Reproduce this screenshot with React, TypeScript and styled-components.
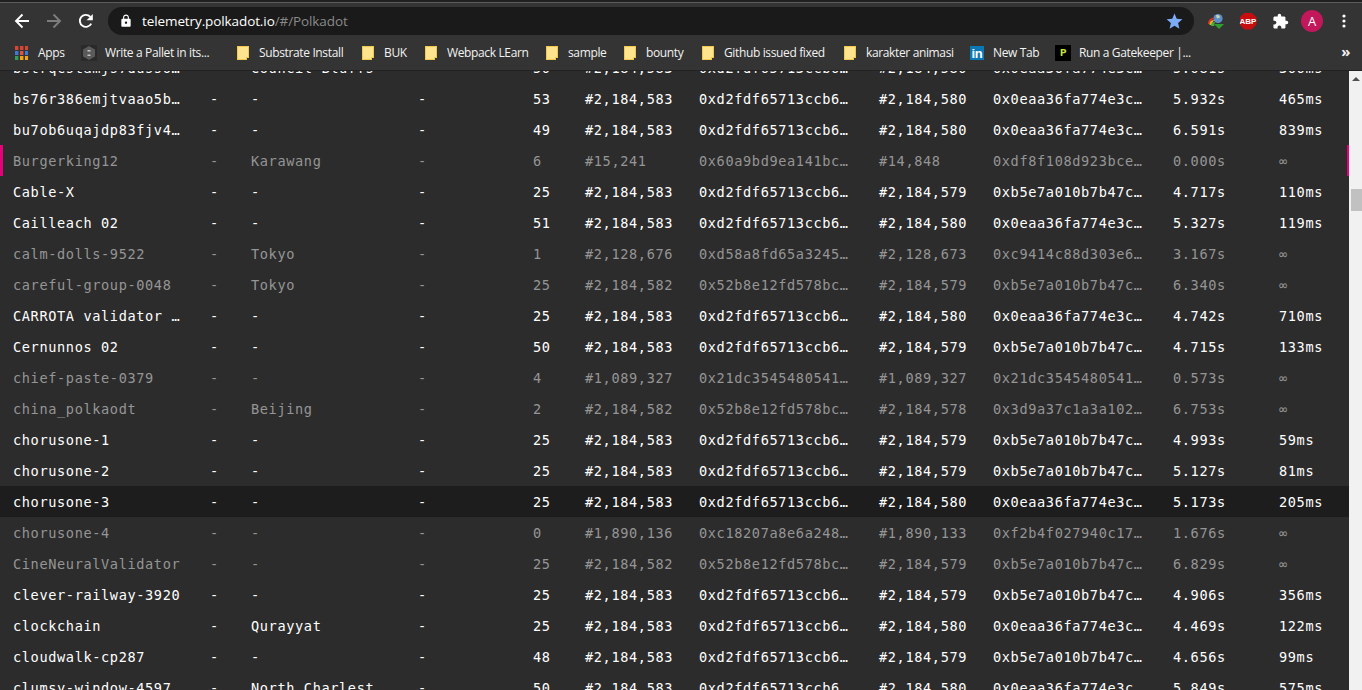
import React from "react"
import styled, { createGlobalStyle } from "styled-components"
import { MdExtension as ExtensionIcon, MdLock as LockIcon, MdStar as StarIcon } from "react-icons/md"

const GlobalStyle = createGlobalStyle`
  html, body {
    margin: 0;
    height: 100%;
    overflow: hidden;
    background: #2c2c2c;
  }
`

const Page = styled.div`
  display: flex;
  flex-direction: column;
  width: 1362px;
  height: 690px;
  overflow: hidden;
`

const TopStrip = styled.div`
  height: 2px;
  background: #202020;
  border-bottom: 1px solid #5c5c5c;
`

const Toolbar = styled.div`
  display: flex;
  align-items: center;
  height: 28px;
  padding: 4px 2px 0 6px;
  background: #343434;
`

const ToolButton = styled.div<{ $dim?: boolean }>`
  display: flex;
  align-items: center;
  justify-content: center;
  flex: none;
  width: 32px;
  height: 28px;
  color: ${(props) => (props.$dim ? "#7d7d7d" : "#ffffff")};
`

const Omnibox = styled.div`
  display: flex;
  align-items: center;
  flex: 1;
  height: 28px;
  margin: 0 6px;
  padding: 0 10px 0 11px;
  border-radius: 14px;
  background: #1a1a1a;
  color: #ffffff;
  font-family: "Open Sans", sans-serif;
  font-size: 13.5px;
  letter-spacing: -0.1px;
`

const UrlHost = styled.span`
  margin-left: 9px;
`

const UrlPath = styled.span`
  flex: 1;
  color: #8a8a8a;
`

const AbpBadge = styled.div`
  display: flex;
  align-items: center;
  justify-content: center;
  width: 17px;
  height: 17px;
  background: #c70d0d;
  clip-path: polygon(30% 0, 70% 0, 100% 30%, 100% 70%, 70% 100%, 30% 100%, 0 70%, 0 30%);
  color: #ffffff;
  font-family: "Liberation Sans", sans-serif;
  font-size: 8px;
  font-weight: 700;
`

const Avatar = styled.div`
  display: flex;
  align-items: center;
  justify-content: center;
  width: 22px;
  height: 22px;
  border-radius: 50%;
  background: #c2185b;
  color: #ffffff;
  font-family: "Open Sans", sans-serif;
  font-size: 13px;
`

const BookmarkBar = styled.div`
  position: relative;
  display: flex;
  align-items: center;
  height: 35px;
  padding-left: 15px;
  background: #343434;
  border-bottom: 1px solid #222222;
  color: #f2f2f2;
  font-family: "Open Sans", sans-serif;
  font-size: 12px;
  letter-spacing: -0.36px;
`

const Bookmark = styled.div<{ $width: number; $gap: number }>`
  display: flex;
  align-items: center;
  flex: none;
  gap: ${(props) => props.$gap}px;
  width: ${(props) => props.$width}px;
  white-space: nowrap;
`

const Overflow = styled.div`
  position: absolute;
  right: 12px;
  top: 6px;
  font-size: 15px;
  font-weight: 700;
`

const Folder = styled.div`
  position: relative;
  flex: none;
  width: 10px;
  height: 12px;
  border: 1px solid #f2c94c;
  background: #ffe48f;
  &::after {
    content: "";
    position: absolute;
    right: -1px;
    bottom: -1px;
    width: 3px;
    height: 3px;
    background: #343434;
    border-left: 1px solid #f2c94c;
    border-top: 1px solid #f2c94c;
    box-sizing: border-box;
  }
`

const LinkedIn = styled.div`
  display: flex;
  align-items: flex-end;
  justify-content: center;
  flex: none;
  width: 14px;
  height: 14px;
  background: #0a78b5;
  color: #ffffff;
  font-family: "Liberation Sans", sans-serif;
  font-size: 13px;
  font-weight: 700;
  line-height: 13px;
`

const GatekeeperLogo = styled.div`
  display: flex;
  align-items: center;
  justify-content: center;
  flex: none;
  width: 16px;
  height: 16px;
  background: #000000;
  color: #c4e538;
  font-family: "Liberation Mono", monospace;
  font-size: 11px;
  font-weight: 700;
`

const TableArea = styled.div`
  position: relative;
  flex: 1;
  overflow: hidden;
`

const Rows = styled.div`
  margin-top: -19px;
  margin-right: 13px;
  font-family: "DejaVu Sans Mono", monospace;
  font-size: 13.6px;
  letter-spacing: 0.62px;
`

const Row = styled.div<{ $dim?: boolean; $hover?: boolean; $flagged?: boolean }>`
  position: relative;
  display: grid;
  grid-template-columns: 197px 41px 167px 115px 52px 114px 180px 114px 180px 106px 1fr;
  align-items: center;
  height: 31px;
  padding-left: 13px;
  background: ${(props) => (props.$hover ? "#1d1d1d" : "transparent")};
  color: ${(props) => (props.$dim ? "#959595" : "#ffffff")};
  white-space: nowrap;
  &::before,
  &::after {
    content: "";
    display: ${(props) => (props.$flagged ? "block" : "none")};
    position: absolute;
    top: 0;
    bottom: 0;
    background: #e6007a;
  }
  &::before {
    left: 0;
    width: 3px;
  }
  &::after {
    right: 0;
    width: 2px;
  }
`

const Scrollbar = styled.div`
  position: absolute;
  top: 0;
  right: 0;
  bottom: 0;
  width: 13px;
  background: #f1f1f1;
`

const ScrollArrow = styled.div`
  position: absolute;
  top: 6px;
  left: 3px;
  width: 0;
  height: 0;
  border-left: 4px solid transparent;
  border-right: 4px solid transparent;
  border-bottom: 4px solid #505050;
`

const ScrollThumb = styled.div`
  position: absolute;
  top: 118px;
  left: 2px;
  right: 0;
  height: 22px;
  background: #c1c1c1;
`

const BackIcon = ({ flip }: { flip?: boolean }) => (
  <svg width="16" height="16" viewBox="0 0 16 16" style={{ transform: flip ? "scaleX(-1)" : undefined }}>
    <path d="M15 8H2M8.5 1.5 2 8l6.5 6.5" fill="none" stroke="currentColor" strokeWidth="1.9" />
  </svg>
)

const ReloadIcon = () => (
  <svg width="16" height="16" viewBox="0 0 16 16">
    <path d="M13.2 10.6A6 6 0 1 1 12.3 3.8" fill="none" stroke="currentColor" strokeWidth="1.9" />
    <path d="M14.8 1v6.2H8.6z" fill="currentColor" />
  </svg>
)

const MoreIcon = () => (
  <svg width="4" height="14" viewBox="0 0 4 14">
    <circle cx="2" cy="2" r="1.6" fill="currentColor" />
    <circle cx="2" cy="7" r="1.6" fill="currentColor" />
    <circle cx="2" cy="12" r="1.6" fill="currentColor" />
  </svg>
)

const DownloadManagerIcon = () => (
  <svg width="18" height="16" viewBox="0 0 18 16">
    <circle cx="11" cy="5.5" r="4.6" fill="#5b8fc9" />
    <path d="M9 2.500c2-1 4 0 4 2l-3 1z" fill="#c9d6a8" />
    <path d="M1 11C1 6 5 4 8 5 5 6 3.500 8 4 11z" fill="#d9352b" />
    <path d="M2.500 12C2.500 8 5 6.500 8 7 6 8 5 9.500 5.500 12z" fill="#e8b32a" />
    <path d="M4 13c0-3 2-4.500 4.500-4 -1 1-1.500 2-1 4z" fill="#3fae3a" />
    <path d="M7 11h10l-5 5z" fill="#2f9e2f" />
  </svg>
)

const AppsIcon = () => (
  <svg width="13" height="14" viewBox="0 0 13 14" style={{ flex: "none" }}>
    {["#d94535", "#d94535", "#d94535", "#3b78d8", "#e0533c", "#3b78d8", "#2f9e57", "#f2a60c", "#f2a60c"].map((fill, i) => (
      <rect key={i} x={(i % 3) * 5} y={Math.floor(i / 3) * 5} width="3.4" height="4" fill={fill} />
    ))}
  </svg>
)

const SubstrateIcon = () => (
  <svg width="16" height="16" viewBox="0 0 16 16" style={{ flex: "none" }}>
    <rect width="16" height="16" fill="#2a2a2a" />
    <path d="M8 1l6 3.500v7L8 15l-6-3.500v-7z" fill="#5a5a5a" />
    <path d="M6.500 5h3v1.500h-3zM6.500 9.500h3V11h-3z" fill="#c4c4c4" />
  </svg>
)

type BookmarkItem = { label: string; width: number; gap: number; icon: React.ReactNode }

const BOOKMARKS: BookmarkItem[] = [
  { label: "Apps", width: 66, gap: 10, icon: <AppsIcon /> },
  { label: "Write a Pallet in its...", width: 156, gap: 8, icon: <SubstrateIcon /> },
  { label: "Substrate Install", width: 125, gap: 10, icon: <Folder /> },
  { label: "BUK", width: 63, gap: 10, icon: <Folder /> },
  { label: "Webpack LEarn", width: 121, gap: 10, icon: <Folder /> },
  { label: "sample", width: 78, gap: 10, icon: <Folder /> },
  { label: "bounty", width: 78, gap: 10, icon: <Folder /> },
  { label: "Github issued fixed", width: 142, gap: 10, icon: <Folder /> },
  { label: "karakter animasi", width: 126, gap: 10, icon: <Folder /> },
  { label: "New Tab", width: 85, gap: 9, icon: <LinkedIn>in</LinkedIn> },
  { label: "Run a Gatekeeper |...", width: 140, gap: 8, icon: <GatekeeperLogo>P</GatekeeperLogo> },
]

const H583 = "0xd2fdf65713ccb6…"
const H582 = "0x52b8e12fd578bc…"
const F580 = "0x0eaa36fa774e3c…"
const F579 = "0xb5e7a010b7b47c…"
const B583 = "#2,184,583"
const B582 = "#2,184,582"
const N580 = "#2,184,580"
const N579 = "#2,184,579"

type NodeRow = {
  cells: string[]
  dim?: boolean
  hover?: boolean
  flagged?: boolean
}

const row = (
  name: string,
  city: string,
  peers: string,
  best: string,
  hash: string,
  final: string,
  finalHash: string,
  time: string,
  latency: string
) => [name, "-", city, "-", peers, best, hash, final, finalHash, time, latency]

const NODES: NodeRow[] = [
  { cells: row("bstrqcstamjs7dusso…", "Council Bluffs", "50", B583, H583, N580, F580, "5.081s", "366ms") },
  { cells: row("bs76r386emjtvaao5b…", "-", "53", B583, H583, N580, F580, "5.932s", "465ms") },
  { cells: row("bu7ob6uqajdp83fjv4…", "-", "49", B583, H583, N580, F580, "6.591s", "839ms") },
  {
    cells: row("Burgerking12", "Karawang", "6", "#15,241", "0x60a9bd9ea141bc…", "#14,848", "0xdf8f108d923bce…", "0.000s", "∞"),
    dim: true,
    flagged: true,
  },
  { cells: row("Cable-X", "-", "25", B583, H583, N579, F579, "4.717s", "110ms") },
  { cells: row("Cailleach 02", "-", "51", B583, H583, N580, F580, "5.327s", "119ms") },
  {
    cells: row("calm-dolls-9522", "Tokyo", "1", "#2,128,676", "0xd58a8fd65a3245…", "#2,128,673", "0xc9414c88d303e6…", "3.167s", "∞"),
    dim: true,
  },
  { cells: row("careful-group-0048", "Tokyo", "25", B582, H582, N579, F579, "6.340s", "∞"), dim: true },
  { cells: row("CARROTA validator …", "-", "25", B583, H583, N580, F580, "4.742s", "710ms") },
  { cells: row("Cernunnos 02", "-", "50", B583, H583, N579, F579, "4.715s", "133ms") },
  {
    cells: row("chief-paste-0379", "-", "4", "#1,089,327", "0x21dc3545480541…", "#1,089,327", "0x21dc3545480541…", "0.573s", "∞"),
    dim: true,
  },
  { cells: row("china_polkaodt", "Beijing", "2", B582, H582, "#2,184,578", "0x3d9a37c1a3a102…", "6.753s", "∞"), dim: true },
  { cells: row("chorusone-1", "-", "25", B583, H583, N579, F579, "4.993s", "59ms") },
  { cells: row("chorusone-2", "-", "25", B583, H583, N579, F579, "5.127s", "81ms") },
  { cells: row("chorusone-3", "-", "25", B583, H583, N580, F580, "5.173s", "205ms"), hover: true },
  {
    cells: row("chorusone-4", "-", "0", "#1,890,136", "0xc18207a8e6a248…", "#1,890,133", "0xf2b4f027940c17…", "1.676s", "∞"),
    dim: true,
  },
  { cells: row("CineNeuralValidator", "-", "25", B582, H582, N579, F579, "6.829s", "∞"), dim: true },
  { cells: row("clever-railway-3920", "-", "25", B583, H583, N579, F579, "4.906s", "356ms") },
  { cells: row("clockchain", "Qurayyat", "25", B583, H583, N580, F580, "4.469s", "122ms") },
  { cells: row("cloudwalk-cp287", "-", "48", B583, H583, N579, F579, "4.656s", "99ms") },
  { cells: row("clumsy-window-4597", "North Charlest", "50", B583, H583, N580, F580, "5.849s", "575ms") },
]

export default function App() {
  return (
    <Page>
      <GlobalStyle />
      <TopStrip />
      <Toolbar>
        <ToolButton><BackIcon /></ToolButton>
        <ToolButton $dim><BackIcon flip /></ToolButton>
        <ToolButton><ReloadIcon /></ToolButton>
        <Omnibox>
          <LockIcon size={14} />
          <UrlHost>telemetry.polkadot.io</UrlHost>
          <UrlPath>/#/Polkadot</UrlPath>
          <StarIcon size={19} color="#7cacf8" />
        </Omnibox>
        <ToolButton><DownloadManagerIcon /></ToolButton>
        <ToolButton><AbpBadge>ABP</AbpBadge></ToolButton>
        <ToolButton><ExtensionIcon size={17} /></ToolButton>
        <ToolButton><Avatar>A</Avatar></ToolButton>
        <ToolButton><MoreIcon /></ToolButton>
      </Toolbar>
      <BookmarkBar>
        {BOOKMARKS.map((b) => (
          <Bookmark key={b.label} $width={b.width} $gap={b.gap}>
            {b.icon}
            {b.label}
          </Bookmark>
        ))}
        <Overflow>»</Overflow>
      </BookmarkBar>
      <TableArea>
        <Rows>
          {NODES.map((n) => (
            <Row key={n.cells[0]} $dim={n.dim} $hover={n.hover} $flagged={n.flagged}>
              {n.cells.map((c, i) => (
                <span key={i}>{c}</span>
              ))}
            </Row>
          ))}
        </Rows>
        <Scrollbar>
          <ScrollArrow />
          <ScrollThumb />
        </Scrollbar>
      </TableArea>
    </Page>
  )
}
